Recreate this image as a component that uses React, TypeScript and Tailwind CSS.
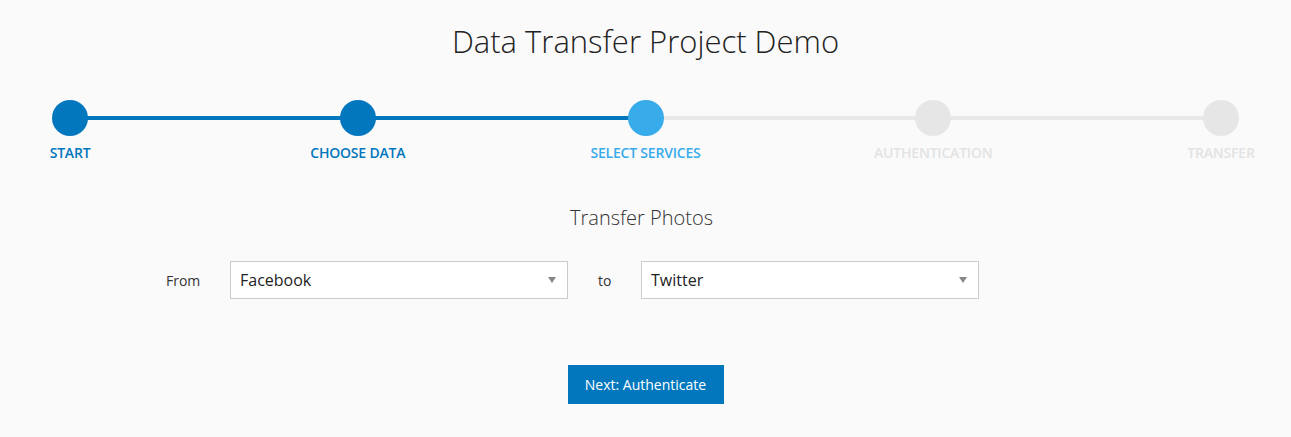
const steps = [
  { label: 'START', state: 'done' },
  { label: 'CHOOSE DATA', state: 'done' },
  { label: 'SELECT SERVICES', state: 'active' },
  { label: 'AUTHENTICATION', state: 'todo' },
  { label: 'TRANSFER', state: 'todo' },
];

function Stepper() {
  return (
    <div className="relative mx-[52px] mt-[37px] flex justify-between">
      {/* track segments */}
      <div className="absolute left-[18px] right-[18px] top-[16px] flex h-[4px]">
        <div className="h-full w-1/2 bg-[#0277bd]" />
        <div className="h-full w-1/2 bg-[#e8e8e8]" />
      </div>
      {steps.map((s) => {
        const dot =
          s.state === 'done'
            ? 'bg-[#0277bd]'
            : s.state === 'active'
              ? 'bg-[#38abeb]'
              : 'bg-[#e6e6e6]';
        const text =
          s.state === 'done'
            ? 'text-[#0277bd]'
            : s.state === 'active'
              ? 'text-[#38abeb]'
              : 'text-[#e3e3e3]';
        return (
          <div key={s.label} className="relative z-10 flex w-[36px] flex-col items-center">
            <div className={`h-[36px] w-[36px] rounded-full ${dot}`} />
            <span className={`mt-[7px] whitespace-nowrap text-[14px] leading-[20px] font-semibold tracking-[-0.2px] ${text}`}>
              {s.label}
            </span>
          </div>
        );
      })}
    </div>
  );
}

function Select({ value }: { value: string }) {
  return (
    <div className="flex h-[38px] w-[338px] items-center justify-between border border-[#cccccc] bg-white pl-[9px] pr-[11px]">
      <span className="text-[16px] text-[#222]">{value}</span>
      <svg width="8" height="6" viewBox="0 0 8 6">
        <path d="M0 0 L8 0 L4 6 Z" fill="#888" />
      </svg>
    </div>
  );
}

export default function App() {
  return (
    <div className="min-h-[437px] w-full bg-[#fafafa] font-['Open_Sans',sans-serif] text-[#222]">
      <h1 className="pt-[19px] text-center text-[31px] font-light leading-[44px] text-[#222]">
        Data Transfer Project Demo
      </h1>
      <Stepper />
      <h2 className="mt-[41px] pr-[8px] text-center text-[20px] font-light leading-[28px] text-[#333]">
        Transfer Photos
      </h2>
      <div className="mt-[29px] flex items-center pl-[166px]">
        <span className="w-[64px] text-[14px] text-[#333]">From</span>
        <Select value="Facebook" />
        <span className="ml-[30px] w-[43px] text-[14px] text-[#333]">to</span>
        <Select value="Twitter" />
      </div>
      <div className="mt-[66px] flex justify-center">
        <button className="h-[39px] w-[156px] bg-[#0277bd] text-[14px] text-white">
          Next: Authenticate
        </button>
      </div>
    </div>
  );
}
